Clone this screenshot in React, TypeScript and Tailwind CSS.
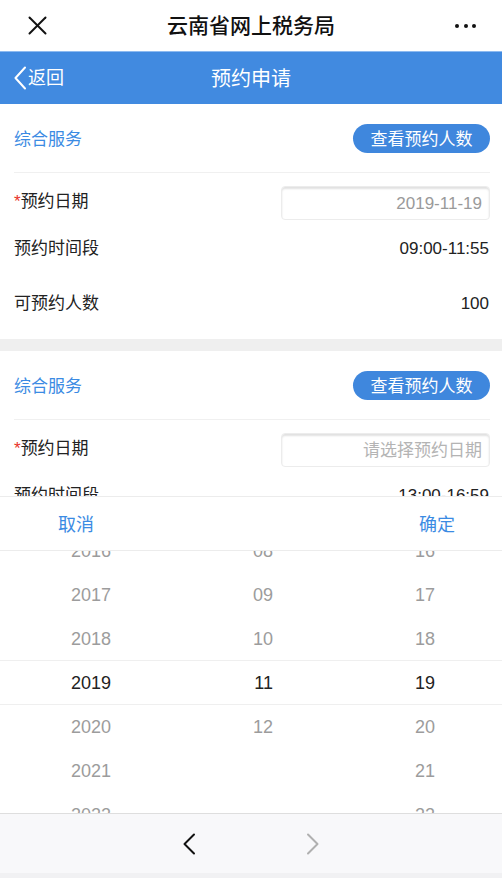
import type { ReactElement } from "react";

const FONT = { fontFamily: '"Liberation Sans", "Noto Sans CJK SC", sans-serif' };

interface FormSection {
  id: string;
  date: string;
  datePlaceholder: boolean;
  period: string;
  count?: string;
}

const sections: FormSection[] = [
  { id: "a", date: "2019-11-19", datePlaceholder: false, period: "09:00-11:55", count: "100" },
  { id: "b", date: "请选择预约日期", datePlaceholder: true, period: "13:00-16:59" },
];

const years = ["2016", "2017", "2018", "2019", "2020", "2021", "2022"];
const months = ["08", "09", "10", "11", "12", "", ""];
const days = ["16", "17", "18", "19", "20", "21", "22"];

function Section({ s }: { s: FormSection }): ReactElement {
  return (
    <section className="bg-white">
      <div className="ml-[14px] mr-[12px] flex h-[69px] items-center justify-between border-b border-[#f0f0f0]">
        <span className="pt-[4px] text-[17px] text-[#3b8be3]">综合服务</span>
        <button
          type="button"
          className="mt-[1px] flex h-[29px] w-[137px] items-center justify-center rounded-full bg-[#3f87dd] pt-[2px] text-[17px] text-white"
        >
          查看预约人数
        </button>
      </div>
      <div className="ml-[14px] mr-[12px] flex items-start justify-between pt-[13px]">
        <span className="pt-[3px] text-[17px] leading-[26px] text-[#222]">
          <span className="text-[#e8322a]">*</span>预约日期
        </span>
        <div className="flex h-[34px] w-[209px] items-center justify-end rounded-[4px] border border-[#ececec] px-[7px] pt-[1px] shadow-[inset_0_2px_2px_rgba(0,0,0,0.12)]">
          <span className={`text-[17px] ${s.datePlaceholder ? "text-[#b4b4b4]" : "text-[#9a9a9a]"}`}>{s.date}</span>
        </div>
      </div>
      <div className="ml-[14px] mr-[13px] flex h-[54px] items-center justify-between pt-[4px] text-[17px] text-[#222]">
        <span>预约时间段</span>
        <span>{s.period}</span>
      </div>
      {s.count && (
        <div className="ml-[14px] mr-[13px] flex h-[56px] items-center justify-between pt-[4px] text-[17px] text-[#222]">
          <span>可预约人数</span>
          <span>{s.count}</span>
        </div>
      )}
      {s.count && <div className="h-[9px]" />}
    </section>
  );
}

function WheelColumn({ items, width }: { items: string[]; width: string }): ReactElement {
  return (
    <div className={`${width} shrink-0 -mt-[22px] text-right`}>
      {items.map((v, i) => (
        <div
          key={i}
          className={`flex h-[44px] items-center justify-end pt-[1px] text-[18px] ${i === 3 ? "text-[#222]" : "text-[#9c9c9c]"}`}
        >
          {v}
        </div>
      ))}
    </div>
  );
}

function DatePicker(): ReactElement {
  return (
    <div className="absolute inset-x-0 bottom-0 flex h-[382px] flex-col bg-white">
      <div className="flex h-[55px] shrink-0 items-center justify-between border-y border-[#ececec] pl-[58px] pr-[47px] pt-[3px] text-[18px] text-[#3b8be3]">
        <span>取消</span>
        <span>确定</span>
      </div>
      <div className="relative h-[262px] shrink-0 overflow-hidden">
        <div className="absolute inset-x-0 top-[109px] h-[45px] border-y border-[#efefef]" />
        <div className="relative flex">
          <WheelColumn items={years} width="w-[111px]" />
          <WheelColumn items={months} width="w-[162px]" />
          <WheelColumn items={days} width="w-[162px]" />
        </div>
      </div>
      <div className="flex h-[60px] shrink-0 items-center justify-center gap-[110px] border-t border-[#dedede] bg-[#f8f8fa]">
        <svg width="14" height="22" viewBox="0 0 14 22" fill="none" stroke="#111" strokeWidth="2" strokeLinecap="round" strokeLinejoin="round">
          <polyline points="12,1.5 2.5,11 12,20.5" />
        </svg>
        <svg width="14" height="22" viewBox="0 0 14 22" fill="none" stroke="#b0b0b0" strokeWidth="2" strokeLinecap="round" strokeLinejoin="round">
          <polyline points="2,1.5 11.5,11 2,20.5" />
        </svg>
      </div>
      <div className="h-[5px] shrink-0 bg-[#f1f1f3]" />
    </div>
  );
}

export default function App(): ReactElement {
  return (
    <div className="relative h-[878px] w-[502px] overflow-hidden bg-[#efefef]" style={FONT}>
      <header className="flex h-[51px] items-center justify-between bg-white pl-[28px] pr-[26px]">
        <svg width="19" height="19" viewBox="0 0 19 19" stroke="#111" strokeWidth="2" strokeLinecap="round">
          <line x1="1.5" y1="1.5" x2="17.5" y2="17.5" />
          <line x1="17.5" y1="1.5" x2="1.5" y2="17.5" />
        </svg>
        <h1 className="text-[21px] font-medium text-[#111]">云南省网上税务局</h1>
        <div className="flex w-[21px] items-center justify-between">
          <span className="h-[4px] w-[4px] rounded-full bg-[#111]" />
          <span className="h-[4px] w-[4px] rounded-full bg-[#111]" />
          <span className="h-[4px] w-[4px] rounded-full bg-[#111]" />
        </div>
      </header>
      <div className="relative flex h-[53px] items-center border-t border-[#8dbaf0] bg-[#418ae0] px-[14px] text-white">
        <div className="flex items-center gap-[2px]">
          <svg width="12" height="24" viewBox="0 0 12 24" fill="none" stroke="#fff" strokeWidth="2" strokeLinecap="round" strokeLinejoin="round">
            <polyline points="11,1.5 1.5,12 11,22.5" />
          </svg>
          <span className="pt-[1px] text-[18px]">返回</span>
        </div>
        <span className="absolute left-1/2 -translate-x-1/2 pt-[1px] text-[20px]">预约申请</span>
      </div>
      <div className="flex flex-col gap-[12px]">
        <Section s={sections[0]} />
        <Section s={sections[1]} />
      </div>
      <DatePicker />
    </div>
  );
}
